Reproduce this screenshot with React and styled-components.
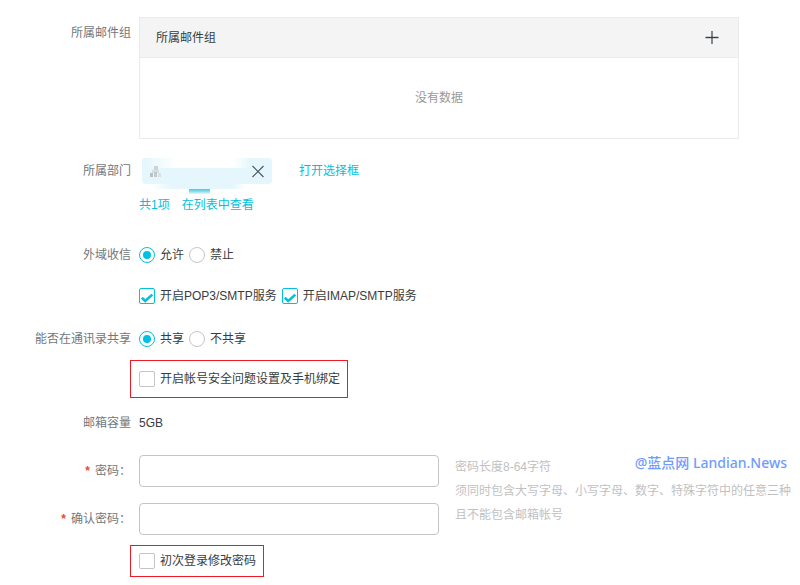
import React, { useState } from "react";
import styled, { createGlobalStyle, css } from "styled-components";

const teal = "#00c1de";

const App = () => {
  const [receive, setReceive] = useState("allow");
  const [share, setShare] = useState("yes");
  const [pop3, setPop3] = useState(true);
  const [imap, setImap] = useState(true);
  const [security, setSecurity] = useState(false);
  const [firstLogin, setFirstLogin] = useState(false);

  return (
    <>
      <GlobalStyle />
      <Form onSubmit={(e) => e.preventDefault()}>
        <Row>
          <Label as="span">所属邮件组</Label>
          <GroupTable>
            <thead>
              <tr>
                <th scope="col">所属邮件组</th>
                <th className="action">
                  <IconButton type="button" aria-label="添加">
                    <PlusIcon />
                  </IconButton>
                </th>
              </tr>
            </thead>
            <tbody>
              <tr>
                <td colSpan={2}>没有数据</td>
              </tr>
            </tbody>
          </GroupTable>
        </Row>

        <Row $space={16}>
          <Label as="span">所属部门</Label>
          <Stack $gap={2}>
            <Line>
              <Tag>
                <TagArt />
                <IconButton type="button" aria-label="移除">
                  <CloseIcon />
                </IconButton>
              </Tag>
              <Link href="#select">打开选择框</Link>
            </Line>
            <Line $gap={12}>
              <Link href="#total">共1项</Link>
              <Link href="#list">在列表中查看</Link>
            </Line>
          </Stack>
        </Row>

        <Row $space={18}>
          <Label as="span">外域收信</Label>
          <Stack $gap={9}>
            <Line $gap={5}>
              <Radio
                name="receive"
                text="允许"
                checked={receive === "allow"}
                onChange={() => setReceive("allow")}
              />
              <Radio
                name="receive"
                text="禁止"
                checked={receive === "deny"}
                onChange={() => setReceive("deny")}
              />
            </Line>
            <Line $gap={5}>
              <Check text="开启POP3/SMTP服务" checked={pop3} onChange={setPop3} />
              <Check text="开启IMAP/SMTP服务" checked={imap} onChange={setImap} />
            </Line>
          </Stack>
        </Row>

        <Row $space={11}>
          <Label as="span">能否在通讯录共享</Label>
          <Stack $gap={5}>
            <Line $gap={5}>
              <Radio
                name="share"
                text="共享"
                checked={share === "yes"}
                onChange={() => setShare("yes")}
              />
              <Radio
                name="share"
                text="不共享"
                checked={share === "no"}
                onChange={() => setShare("no")}
              />
            </Line>
            <RedBox $tall>
              <Check
                text="开启帐号安全问题设置及手机绑定"
                checked={security}
                onChange={setSecurity}
              />
            </RedBox>
          </Stack>
        </Row>

        <Row $space={9}>
          <Label as="span">邮箱容量</Label>
          <Line>5GB</Line>
        </Row>

        <PasswordArea>
          <Fields>
            <Label htmlFor="password">
              <Star>*</Star>密码：
            </Label>
            <TextInput id="password" type="password" />
            <Label htmlFor="confirm">
              <Star>*</Star>确认密码：
            </Label>
            <TextInput id="confirm" type="password" />
          </Fields>
          <Hint>
            密码长度8-64字符
            <br />
            须同时包含大写字母、小写字母、数字、特殊字符中的任意三种
            <br />
            且不能包含邮箱帐号
            <Watermark>@蓝点网 Landian.News</Watermark>
          </Hint>
        </PasswordArea>

        <Row $space={10}>
          <span />
          <RedBox>
            <Check text="初次登录修改密码" checked={firstLogin} onChange={setFirstLogin} />
          </RedBox>
        </Row>
      </Form>
    </>
  );
};

const Radio = ({ text, ...rest }) => (
  <Choice>
    <RadioInput type="radio" {...rest} />
    {text}
  </Choice>
);

const Check = ({ text, checked, onChange }) => (
  <Choice>
    <CheckBox>
      <input type="checkbox" checked={checked} onChange={(e) => onChange(e.target.checked)} />
      {checked && (
        <svg width="16" height="16" viewBox="0 0 16 16" fill="none">
          <path d="M2.8 9.8L6.2 13L13.3 6.6" stroke={teal} strokeWidth="2.6" />
        </svg>
      )}
    </CheckBox>
    {text}
  </Choice>
);

const PlusIcon = () => (
  <svg width="14" height="14" viewBox="0 0 14 14" fill="none">
    <path d="M7 0V13" stroke="#85888c" strokeWidth="2" />
    <path d="M0.5 6.5H13.5" stroke="#373d41" strokeWidth="1.4" />
  </svg>
);

const CloseIcon = () => (
  <svg width="14" height="14" viewBox="0 0 14 14" fill="none">
    <path d="M1.5 2L12.5 13M12.5 2L1.5 13" stroke="#4b5458" strokeWidth="1.1" />
  </svg>
);

// smudged department name, it runs a little below the tag
const TagArt = () => (
  <svg width="130" height="36" viewBox="0 0 130 36">
    <defs>
      <linearGradient id="white">
        <stop offset="0" stopColor="#fff" stopOpacity="0" />
        <stop offset="0.3" stopColor="#fff" />
        <stop offset="0.84" stopColor="#fff" />
        <stop offset="1" stopColor="#fff" stopOpacity="0" />
      </linearGradient>
      <linearGradient id="pale">
        <stop offset="0" stopColor="#e5f7fc" stopOpacity="0" />
        <stop offset="0.2" stopColor="#e5f7fc" />
        <stop offset="0.85" stopColor="#e5f7fc" />
        <stop offset="1" stopColor="#e5f7fc" stopOpacity="0" />
      </linearGradient>
      <linearGradient id="dash" x1="0" y1="0" x2="0" y2="1">
        <stop offset="0" stopColor="#45cbe0" />
        <stop offset="0.5" stopColor="#8adeeb" />
        <stop offset="1" stopColor="#e5f7fc" />
      </linearGradient>
    </defs>
    <rect x="3" y="0" width="105" height="10" fill="url(#white)" />
    <rect x="10" y="10" width="94" height="21" fill="url(#pale)" />
    <rect x="47" y="31" width="21" height="5" fill="url(#dash)" />
    <path d="M12 8H16V12H12Z" fill="#ccd3d5" />
    <path d="M10 12H17V15H10Z" fill="#d6dfe1" />
    <path d="M8 15H11V19H8Z" fill="#b9c0c2" />
    <path d="M12 14H15V19H12Z" fill="#c0c9cb" />
    <path d="M16 15H19V19H16Z" fill="#d6e2e5" />
  </svg>
);

const GlobalStyle = createGlobalStyle`
  * {
    box-sizing: border-box;
  }

  body {
    margin: 0;
    background: #fff;
    color: #373d41;
    font-family: "Liberation Sans", "Noto Sans CJK SC", sans-serif;
    font-size: 12px;
    line-height: 32px;
  }
`;

const Form = styled.form`
  padding: 17px 8px 8px 0;
`;

const Row = styled.div`
  display: grid;
  grid-template-columns: 131px minmax(0, 1fr);
  column-gap: 8px;
  margin-top: ${(p) => p.$space || 0}px;
`;

const Label = styled.label`
  color: #73777a;
  text-align: right;
`;

const Star = styled.span`
  margin-right: 5px;
  color: #f04631;
  font-weight: bold;
`;

const Stack = styled.div`
  display: flex;
  flex-direction: column;
  gap: ${(p) => p.$gap}px;
`;

const Line = styled.div`
  display: flex;
  align-items: center;
  height: 32px;
  gap: ${(p) => p.$gap || 0}px;
`;

const GroupTable = styled.table`
  width: 100%;
  max-width: 600px;
  border: 1px solid #ebebeb;
  border-spacing: 0;

  th {
    height: 40px;
    padding: 0 16px;
    background: #f4f4f4;
    border-bottom: 1px solid #ebebeb;
    font-weight: normal;
    line-height: 24px;
    text-align: left;
  }

  .action {
    padding: 0 19px;
    text-align: right;
  }

  td {
    height: 80px;
    padding: 0;
    color: #999;
    text-align: center;
  }
`;

const IconButton = styled.button`
  position: relative;
  display: inline-flex;
  padding: 0;
  border: 0;
  background: none;
  vertical-align: middle;
  cursor: pointer;
`;

const Tag = styled.div`
  position: relative;
  display: flex;
  align-items: center;
  justify-content: flex-end;
  width: 130px;
  height: 26px;
  margin: 0 27px 0 3px;
  padding-right: 7px;
  border-radius: 3px;
  background: #e5f7fc;

  > svg {
    position: absolute;
    top: 0;
    left: 0;
  }
`;

const Link = styled.a`
  color: ${teal};
  text-decoration: none;
`;

const Choice = styled.label`
  display: flex;
  align-items: center;
  gap: 5px;
  white-space: nowrap;
`;

const control = css`
  appearance: none;
  display: grid;
  place-items: center;
  width: 16px;
  height: 16px;
  margin: 0;
  border: 1px solid #c3c5c6;
  background: #fff;

  &:checked {
    border-color: ${teal};
  }
`;

const RadioInput = styled.input`
  ${control}
  border-radius: 50%;

  &:checked::before {
    content: "";
    width: 8px;
    height: 8px;
    border-radius: 50%;
    background: ${teal};
  }
`;

const CheckBox = styled.span`
  position: relative;
  display: flex;

  input {
    ${control}
    border-radius: 2px;
  }

  svg {
    position: absolute;
    top: 0;
    left: 0;
    pointer-events: none;
  }
`;

const RedBox = styled.div`
  display: flex;
  align-items: center;
  justify-self: start;
  align-self: flex-start;
  height: ${(p) => (p.$tall ? 38 : 32)}px;
  margin-left: -9px;
  padding: 0 7px 0 8px;
  border: 1px solid #ed1c24;
`;

const PasswordArea = styled.div`
  display: flex;
  gap: 16px;
  margin-top: 16px;
`;

const Fields = styled.div`
  display: grid;
  grid-template-columns: 131px 300px;
  gap: 16px 8px;
`;

const TextInput = styled.input`
  width: 100%;
  height: 32px;
  padding: 0 8px;
  border: 1px solid #c3c5c6;
  border-radius: 4px;
  font: inherit;
`;

const Hint = styled.p`
  position: relative;
  flex: 1;
  min-width: 0;
  margin: 0;
  color: #c1c1c1;
  line-height: 24px;
`;

const Watermark = styled.span`
  position: absolute;
  top: -4px;
  right: 5px;
  color: #6f9bff;
  font-family: "Noto Sans", "Noto Sans CJK SC", sans-serif;
  font-size: 14px;
  font-weight: 500;
  white-space: nowrap;
`;

export default App;
